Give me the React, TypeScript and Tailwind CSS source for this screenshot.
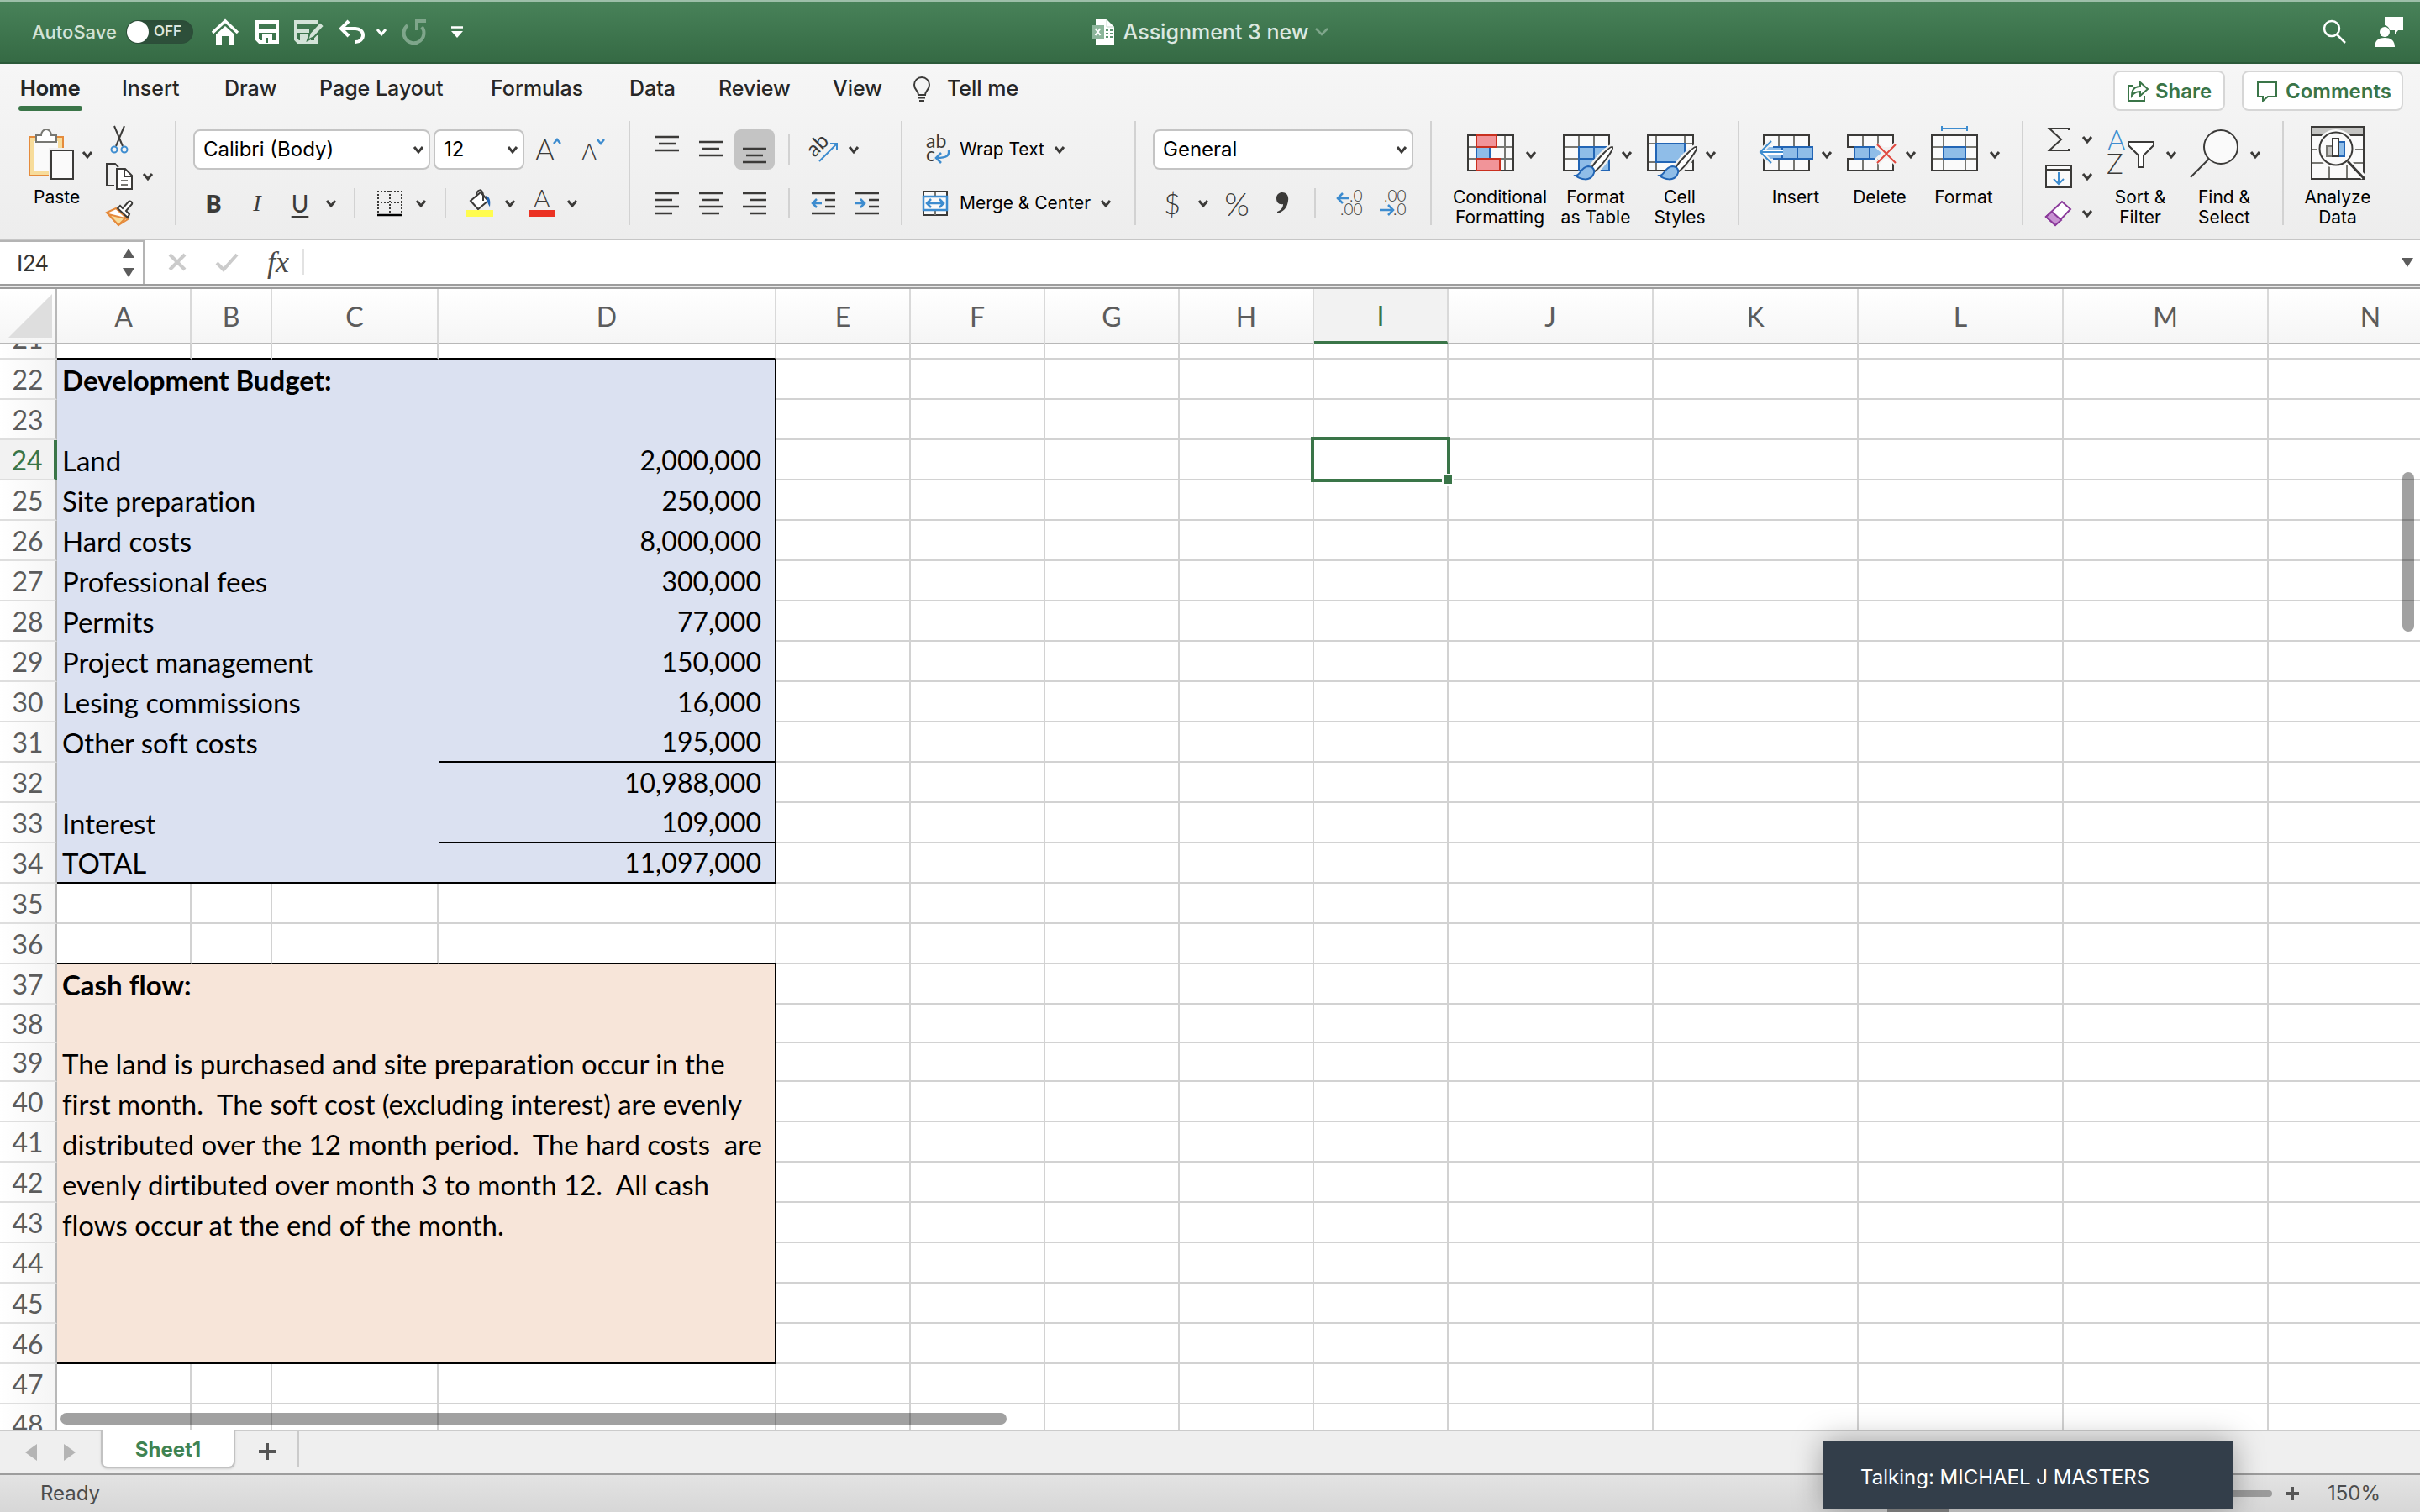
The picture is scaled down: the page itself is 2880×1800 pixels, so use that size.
import React from 'react';

const INK = '#3b3a38';
const BLUE = '#3d8ccf';
const DARK_BLUE = '#2265b5';
const LIGHT_BLUE = '#8fbde8';

interface SvgProps {
  w: number;
  h: number;
  children: React.ReactNode;
}

const Svg: React.FC<SvgProps> = ({ w, h, children }) => (
  <svg width={w} height={h} viewBox={`0 0 ${w} ${h}`} fill="none" className="shrink-0 overflow-visible" aria-hidden="true">
    {children}
  </svg>
);

const Chevron = ({ color = INK }: { color?: string }) => (
  <Svg w={12} h={10}>
    <path d="M1 2l5 6 5-6" stroke={color} strokeWidth="3" />
  </Svg>
);

const Separator = () => <div className="h-[124px] w-[2px] shrink-0 bg-[#d2d2d2]" />;
const SmallSeparator = ({ className = '' }: { className?: string }) => (
  <div className={`h-9 w-[2px] shrink-0 bg-[#d2d2d2] ${className}`} />
);

/* ---------- title bar ---------- */

const TitleBar = () => (
  <header className="grid h-[76px] shrink-0 grid-cols-[1fr_auto_1fr] items-center border-t-2 border-b-2 border-t-[#9dbfa9] border-b-[#2b5a39] bg-linear-to-b from-[#488259] to-[#356a44] text-white">
    <div className="flex items-center pl-[38px]">
      <label htmlFor="autosave" className="w-[112px] text-[22px] font-medium text-[#d3e3d8]">AutoSave</label>
      <button id="autosave" role="switch" aria-checked="false" className="flex h-7 w-20 items-center gap-[6px] rounded-full bg-[#2d4f3a] pl-px text-[17px] font-semibold text-[#dbe6df] shadow-inner">
        <span className="size-[26px] rounded-full bg-white" />
        OFF
      </button>
      <button aria-label="Home" className="ml-[22px]">
        <Svg w={32} h={30}>
          <path d="M1 16L16 2l15 14" stroke="#fff" strokeWidth="3.5" />
          <path d="M5 18L16 8l11 10v12h-7V20h-8v10H5z" fill="#fff" />
        </Svg>
      </button>
      <button aria-label="Save" className="ml-5">
        <Svg w={28} h={28}>
          <path d="M2 2h24v24H5l-3-3z" stroke="#fff" strokeWidth="4" />
          <path d="M2 13h24" stroke="#fff" strokeWidth="4" />
          <path d="M8 17h12v10H8z" fill="#fff" />
          <path d="M12 21h3v6h-3z" fill="#3d764e" />
        </Svg>
      </button>
      <button aria-label="Save as" className="ml-[18px]">
        <Svg w={36} h={28}>
          <path d="M28 2H2v21l3 3h21v-8" stroke="#d3e3d8" strokeWidth="4" />
          <path d="M2 13h16" stroke="#d3e3d8" strokeWidth="4" />
          <path d="M7 17h10l3 4v6H7z" fill="#d3e3d8" />
          <path d="M16 24l3-9L31 2l5 5-12 13z" fill="#d3e3d8" stroke="#3d764e" strokeWidth="2" />
        </Svg>
      </button>
      <button aria-label="Undo" className="ml-[18px]">
        <Svg w={30} h={28}>
          <path d="M11 1L2 10l9 9M3 10h16a9 8 0 0 1 0 16" stroke="#fff" strokeWidth="4" />
        </Svg>
      </button>
      <button aria-label="Undo history" className="ml-[14px]"><Chevron color="#fff" /></button>
      <button aria-label="Redo" className="ml-[18px]">
        <Svg w={30} h={30}>
          <path d="M7 7a12 12 0 1 0 17 2M17 2h12M18 0v13" stroke="#7fa68b" strokeWidth="4" />
        </Svg>
      </button>
      <button aria-label="Customize toolbar" className="ml-[29px]">
        <Svg w={14} h={14}>
          <path d="M0 1.500h14" stroke="#fff" strokeWidth="2.500" />
          <path d="M0 6h14l-7 8z" fill="#fff" />
        </Svg>
      </button>
    </div>
    <h1 className="flex items-center text-[25px] font-medium text-[#dce8e0]">
      <Svg w={28} h={30}>
        <path d="M5 0h13l9 9v21H5z" fill="#fff" />
        <path d="M18 0v9h9" stroke="#c9d8ce" />
        <path d="M17 12h3v2h-3zM22 12h3v2h-3zM17 16h3v2h-3zM22 16h3v2h-3zM17 20h3v2h-3zM22 20h3v2h-3z" fill="#5f9471" />
        <path d="M0 7h15v16H0z" fill="#8cb59a" />
        <path d="M4.500 11l6 8M10.500 11l-6 8" stroke="#fff" strokeWidth="2" />
      </Svg>
      <span className="ml-[10px] pt-[2px]">Assignment 3 new</span>
      <button aria-label="File options" className="ml-2">
        <Svg w={16} h={10}>
          <path d="M1 1l7 7 7-7" stroke="#7fa68b" strokeWidth="2.500" />
        </Svg>
      </button>
    </h1>
    <div className="flex items-center justify-end pr-5">
      <button aria-label="Search">
        <Svg w={28} h={28}>
          <circle cx="11" cy="10" r="9" stroke="#fff" strokeWidth="2.500" />
          <path d="M17 17l10 10" stroke="#fff" strokeWidth="2.500" />
        </Svg>
      </button>
      <button aria-label="Presence" className="ml-[34px]">
        <Svg w={34} h={36}>
          <path d="M12 0h22v16h-6l-4 5v-5H18a8 8 0 0 0-6-6z" fill="#fff" />
          <circle cx="12" cy="18" r="6" fill="#fff" />
          <path d="M0 36c0-8 5-11 12-11s12 3 12 11z" fill="#fff" />
        </Svg>
      </button>
    </div>
  </header>
);

/* ---------- ribbon tabs ---------- */

const tabs = [
  { name: 'Insert', width: 'w-[122px]' },
  { name: 'Draw', width: 'w-[113px]' },
  { name: 'Page Layout', width: 'w-[204px]' },
  { name: 'Formulas', width: 'w-[165px]' },
  { name: 'Data', width: 'w-[106px]' },
  { name: 'Review', width: 'w-[136px]' },
  { name: 'View', width: 'w-[96px]' },
];

const RibbonTabs = () => (
  <nav className="flex h-[68px] items-start text-[25px] font-medium text-[#262626]">
    <div className="w-[145px] shrink-0 pl-[22px]">
      <button className="relative h-14 px-[2px] pt-1 font-bold">
        Home
        <span className="absolute inset-x-0 bottom-0 h-[6px] rounded-full bg-[#3a7548]" />
      </button>
    </div>
    {tabs.map((tab) => (
      <button key={tab.name} className={`h-14 shrink-0 pt-1 text-left whitespace-nowrap ${tab.width}`}>{tab.name}</button>
    ))}
    <button className="flex h-14 items-center gap-5 pt-1">
      <Svg w={20} h={30}>
        <path d="M6 22c0-5-5-6-5-12a9 9 0 0 1 18 0c0 6-5 7-5 12zM6 25.500h8" stroke={INK} strokeWidth="2" />
        <path d="M7 29h6" stroke={INK} strokeWidth="2" />
      </Svg>
      Tell me
    </button>
    <div className="ml-auto flex gap-5 pt-2 pr-5 text-[24px] font-semibold text-[#3a7548]">
      <button className="flex h-12 w-[133px] items-center gap-2 rounded-lg border-2 border-[#d6d6d6] bg-white pt-[2px] pl-[14px]">
        <Svg w={26} h={26}>
          <path d="M8 6H2v18h19v-6" stroke="#3a7548" strokeWidth="2" />
          <path d="M16 2l9 8-9 8v-5c-5 0-8 2-10 5 0-8 4-11 10-11z" stroke="#3a7548" strokeWidth="2" />
        </Svg>
        Share
      </button>
      <button className="flex h-12 w-[192px] items-center gap-[10px] rounded-lg border-2 border-[#d6d6d6] bg-white pt-[2px] pl-4">
        <Svg w={24} h={24}>
          <path d="M1 1h22v17H13l-6 5v-5H1z" stroke="#3a7548" strokeWidth="2" />
        </Svg>
        Comments
      </button>
    </div>
  </nav>
);

/* ---------- ribbon tools ---------- */

interface DropdownProps {
  label: string;
  value: string;
  width: string;
}

const Dropdown: React.FC<DropdownProps> = ({ label, value, width }) => (
  <div className={`relative h-12 shrink-0 ${width}`}>
    <select aria-label={label} className="h-full w-full appearance-none rounded-lg border-2 border-[#c4c4c4] bg-white pl-[10px] text-[24px] text-black">
      <option>{value}</option>
    </select>
    <span className="pointer-events-none absolute inset-y-0 right-2 flex items-center"><Chevron /></span>
  </div>
);

interface BigButtonProps {
  label: React.ReactNode;
  icon: React.ReactNode;
  width?: string;
  chevron?: boolean;
}

const BigButton: React.FC<BigButtonProps> = ({ label, icon, width = 'w-[100px]', chevron = true }) => (
  <button className={`flex shrink-0 flex-col items-center pt-[10px] text-[21px] leading-6 text-black ${width}`}>
    <span className="flex h-[60px] items-center gap-[10px]">
      {icon}
      {chevron && <Chevron />}
    </span>
    <span className={`mt-[9px] whitespace-nowrap ${chevron ? 'pr-1' : ''}`}>{label}</span>
  </button>
);

const Lines = ({ d }: { d: string }) => <path d={d} stroke={INK} strokeWidth="2.500" />;

const Brush = () => (
  <>
    <path d="M59 21c-3-2-22 19-25 25l4 4c7-5 23-26 21-29z" fill="#fff" stroke="#f1f1f1" strokeWidth="7" />
    <path d="M59 21c-3-2-22 19-25 25l4 4c7-5 23-26 21-29z" fill="#fff" stroke={INK} strokeWidth="2" />
    <path d="M15 55c6 0 6-10 15-11 6 0 9 5 6 10-4 8-15 6-21 1z" fill={LIGHT_BLUE} stroke={DARK_BLUE} strokeWidth="2" />
  </>
);

const ConditionalIcon = () => (
  <Svg w={60} h={60}>
    <path d="M1 7h54v42H1z" fill="#fafafa" />
    <path d="M11 7v42M45 7v42M1 21h54M1 35h54" stroke="#777772" strokeWidth="2" />
    <path d="M1 7h54v42H1z" stroke={INK} strokeWidth="2" />
    <path d="M11 21h16v14H11z" fill={LIGHT_BLUE} stroke={DARK_BLUE} strokeWidth="2" />
    <path d="M11 7h24v14H11zM11 35h28v14H11z" fill="#f19499" stroke="#c9301f" strokeWidth="2" />
  </Svg>
);

const TableIcon = () => (
  <Svg w={60} h={60}>
    <path d="M1 7h54v42H1z" fill="#fafafa" />
    <path d="M19 7v42M37 7v14M1 21h54M1 35h18" stroke="#777772" strokeWidth="2" />
    <path d="M1 7h54v42H1z" stroke={INK} strokeWidth="2" />
    <path d="M19 21h36v28H19zM37 21v28M19 35h36" fill={LIGHT_BLUE} stroke={DARK_BLUE} strokeWidth="2" />
    <Brush />
  </Svg>
);

const StylesIcon = () => (
  <Svg w={60} h={60}>
    <path d="M1 7h54v42H1z" fill="#fafafa" />
    <path d="M11 7v42M45 7v42M1 17h54M1 39h54" stroke="#777772" strokeWidth="2" />
    <path d="M1 7h54v42H1z" stroke={INK} strokeWidth="2" />
    <path d="M11 17h34v22H11z" fill={LIGHT_BLUE} stroke={DARK_BLUE} strokeWidth="2" />
    <Brush />
  </Svg>
);

const InsertIcon = () => (
  <Svg w={60} h={60}>
    <path d="M1 7h54v42H1z" fill="#fafafa" />
    <path d="M19 7v42M37 7v42" stroke="#777772" strokeWidth="2" />
    <path d="M1 7h54v42H1z" stroke={INK} strokeWidth="2" />
    <path d="M4 21h55v14H4z" fill={LIGHT_BLUE} />
    <path d="M12 21h47v14H12M23 21v14M41 21v14" stroke={DARK_BLUE} strokeWidth="2" />
    <path d="M10 14L-3 27l13 13" stroke="#f1f1f1" strokeWidth="6" />
    <path d="M24 27H-1" stroke="#fff" strokeWidth="6" />
    <path d="M10 14L-3 27l13 13M24 27H-3" stroke={BLUE} strokeWidth="2" />
  </Svg>
);

const DeleteIcon = () => (
  <Svg w={60} h={60}>
    <path d="M1 7h54v14H1zM1 35h54v14H1z" fill="#fafafa" />
    <path d="M19 7v14M37 7v14M19 35v14M37 35v14" stroke="#777772" strokeWidth="2" />
    <path d="M9 21H1V7h54v10M9 35H1v14h54V40" stroke={INK} strokeWidth="2" />
    <path d="M9 21h24l8 7-8 7H9z" fill={LIGHT_BLUE} />
    <path d="M34 21H9v14h25M27 21v14" stroke={DARK_BLUE} strokeWidth="2" />
    <path d="M36 18l22 22M58 18L36 40" stroke="#f1f1f1" strokeWidth="6" />
    <path d="M36 18l22 22M58 18L36 40" stroke="#e0483e" strokeWidth="2" />
  </Svg>
);

const FormatIcon = () => (
  <Svg w={60} h={60}>
    <path d="M13-1h30M13-4v6M43-4v6" stroke={BLUE} strokeWidth="2" />
    <path d="M1 7h54v42H1z" fill="#fafafa" />
    <path d="M15 7v42M41 7v42M1 21h54M1 35h54" stroke="#777772" strokeWidth="2" />
    <path d="M1 7h54v42H1z" stroke={INK} strokeWidth="2" />
    <path d="M15 21h26v14H15z" fill={LIGHT_BLUE} stroke={DARK_BLUE} strokeWidth="2" />
  </Svg>
);

const SortIcon = () => (
  <Svg w={60} h={60}>
    <text x="0" y="25" fontSize="33" fontWeight="300" fontFamily="Lato" fill={BLUE}>A</text>
    <text x="-1" y="53" fontSize="33" fontWeight="300" fontFamily="Lato" fill={INK}>Z</text>
    <path d="M25 15h30v4L43 31v14h-6V31L25 19z" fill="#fff" stroke={INK} strokeWidth="2" />
  </Svg>
);

const FindIcon = () => (
  <Svg w={60} h={60}>
    <circle cx="35" cy="21" r="20" fill="#fafafa" stroke={INK} strokeWidth="2" />
    <path d="M21 35L-1 57" stroke={INK} strokeWidth="2" />
  </Svg>
);

const AnalyzeIcon = () => (
  <Svg w={64} h={60}>
    <path d="M1-3h62v62H1z" fill="#fafafa" />
    <path d="M1-3h62v10H1z" fill="#c4c4c2" />
    <path d="M1 24h62M1 40h62M22 40v19M43 40v19" stroke="#777772" strokeWidth="2" />
    <path d="M1-3h62v62H1zM1 7h62" stroke={INK} strokeWidth="2" />
    <circle cx="30" cy="23" r="23" fill="#fafafa" />
    <path d="M44 38l19 19" stroke="#fafafa" strokeWidth="7" />
    <path d="M19 20h7v12h-7z" fill="#c4c4c2" stroke="#777772" strokeWidth="2" />
    <path d="M33 15h7v17h-7z" fill={LIGHT_BLUE} stroke={DARK_BLUE} strokeWidth="2" />
    <path d="M26 11h7v21h-7z" fill="#fff" stroke={INK} strokeWidth="2" />
    <circle cx="30" cy="23" r="19.500" stroke={INK} strokeWidth="2" />
    <path d="M44 38l19 20" stroke={INK} strokeWidth="3" />
  </Svg>
);

const ClipboardGroup = () => (
  <div className="flex w-[208px] shrink-0 pl-[34px]">
    <button className="flex w-[92px] shrink-0 flex-col items-start pt-[10px] text-[21px] leading-6">
      <span className="flex h-[60px] items-center gap-[10px]">
        <Svg w={54} h={60}>
          <path d="M1 9h40v46H1z" fill="#f7dc9b" stroke="#e58b3c" strokeWidth="2" />
          <path d="M7 14h28v36H7z" fill="#fafafa" />
          <path d="M9 15V7h6a6 7 0 0 1 12 0h6v8z" fill="#fff" stroke="#777772" strokeWidth="2" />
          <path d="M24 22h30v38H24z" fill="#f1f1f1" />
          <path d="M27 25h26v34H27z" fill="#fafafa" stroke={INK} strokeWidth="2" />
        </Svg>
        <Chevron />
      </span>
      <span className="mt-[9px] ml-[6px]">Paste</span>
    </button>
    <div className="flex flex-col">
      <button aria-label="Cut" className="flex h-11 w-8 items-center justify-center">
        <Svg w={20} h={32}>
          <path d="M4 0l10 24M16 0L6 24" stroke={INK} strokeWidth="2" />
          <circle cx="4" cy="28" r="3.500" stroke={BLUE} strokeWidth="2" />
          <circle cx="16" cy="28" r="3.500" stroke={BLUE} strokeWidth="2" />
        </Svg>
      </button>
      <button aria-label="Copy" className="flex h-11 items-center gap-3">
        <Svg w={32} h={32}>
          <path d="M10 27H1V1h10l4 4" stroke={INK} strokeWidth="2" />
          <path d="M13 7h10l8 8v16H13z" fill="#fff" stroke={INK} strokeWidth="2" />
          <path d="M22 7v9h9" stroke={INK} strokeWidth="2" />
          <path d="M18 21h8M18 26h8" stroke="#777772" strokeWidth="2" />
        </Svg>
        <Chevron />
      </button>
      <button aria-label="Format painter" className="flex h-11 items-center">
        <Svg w={32} h={30}>
          <path d="M1 14l11-5 14 13-11 7z" fill="#fff" stroke="#e58b3c" strokeWidth="2" />
          <path d="M3 16l20 5-8 8z" fill="#f7dc9b" stroke="#e58b3c" strokeWidth="2" />
          <path d="M14 9l12 11 2-4-4-4 7-8c1-3-2-4-4-3l-7 8-3-3z" fill="#fff" stroke={INK} strokeWidth="2" />
        </Svg>
      </button>
    </div>
  </div>
);

const FontGroup = () => (
  <div className="w-[538px] shrink-0 pt-[10px] pl-5">
    <div className="flex h-12 items-center">
      <Dropdown label="Font" value="Calibri (Body)" width="w-[282px]" />
      <div className="w-1" />
      <Dropdown label="Font size" value="12" width="w-[108px]" />
      <button aria-label="Increase font size" className="ml-[14px]">
        <Svg w={30} h={32}>
          <text x="-1" y="29" fontSize="35" fontWeight="300" fontFamily="Lato" fill={INK}>A</text>
          <path d="M21 9l4-5 4 5" stroke={BLUE} strokeWidth="2.500" />
        </Svg>
      </button>
      <button aria-label="Decrease font size" className="ml-[25px]">
        <Svg w={28} h={32}>
          <text x="-1" y="29" fontSize="28" fontWeight="300" fontFamily="Lato" fill={INK}>A</text>
          <path d="M18 4l4 5 4-5" stroke={BLUE} strokeWidth="2.500" />
        </Svg>
      </button>
    </div>
    <div className="mt-[22px] flex h-9 items-center font-['Lato',sans-serif] text-[28px] leading-9 text-[#3b3a38]">
      <button aria-label="Bold" className="w-12 font-extrabold">B</button>
      <button aria-label="Italic" className="w-14 font-['Liberation_Serif',serif] italic">I</button>
      <button aria-label="Underline" className="w-[46px] underline decoration-2 underline-offset-4">U</button>
      <button aria-label="Underline options" className="flex w-7 justify-center"><Chevron /></button>
      <SmallSeparator className="ml-[13px]" />
      <button aria-label="Borders" className="ml-[26px] flex items-center gap-4">
        <Svg w={30} h={30}>
          <path d="M0 1h30M0 14h30M1 0v28M15 0v28M29 0v28" stroke={INK} strokeWidth="2" strokeDasharray="2 2" />
          <path d="M0 29h30" stroke="#000" strokeWidth="2.500" />
        </Svg>
        <Chevron />
      </button>
      <SmallSeparator className="ml-[22px]" />
      <button aria-label="Fill color" className="ml-6 flex items-center gap-[14px]">
        <Svg w={32} h={32}>
          <path d="M5 13L17 3l9 10-12 10z" fill="#fff" stroke={INK} strokeWidth="2" />
          <path d="M12 8c0-10 8-10 8-1v6" stroke={INK} strokeWidth="2" />
          <path d="M23 7c5 1 6 6 5 13-2-2-3-6-5-13z" fill={DARK_BLUE} />
          <path d="M0 24h32v8H0z" fill="#fffc4f" />
        </Svg>
        <Chevron />
      </button>
      <button aria-label="Font color" className="ml-4 flex items-center gap-[14px]">
        <Svg w={32} h={32}>
          <text x="6" y="21" fontSize="30" fontWeight="300" fontFamily="Lato" fill={INK}>A</text>
          <path d="M0 24h32v8H0z" fill="#eb3223" />
        </Svg>
        <Chevron />
      </button>
    </div>
  </div>
);

const AlignGroup = () => (
  <div className="w-[322px] shrink-0 pt-[10px] pl-5">
    <div className="flex h-12 items-center gap-1">
      <button aria-label="Top align" className="flex h-12 w-12 justify-center rounded-lg">
        <Svg w={28} h={48}><Lines d="M0 9h28M4 17h20M0 25h28" /></Svg>
      </button>
      <button aria-label="Middle align" className="flex h-12 w-12 justify-center rounded-lg">
        <Svg w={28} h={48}><Lines d="M0 15h28M4 23h20M0 31h28" /></Svg>
      </button>
      <button aria-label="Bottom align" className="flex h-12 w-12 justify-center rounded-lg bg-[#c4c4c4]">
        <Svg w={28} h={48}><Lines d="M0 23h28M4 31h20M0 39h28" /></Svg>
      </button>
      <SmallSeparator className="ml-3" />
      <button aria-label="Orientation" className="ml-5 flex items-center gap-3">
        <Svg w={34} h={32}>
          <text x="4" y="25" fontSize="25" fontFamily="Lato" fill={INK} transform="rotate(-45 6 24)">ab</text>
          <path d="M11 30L32 9M24 9h8v8" stroke={BLUE} strokeWidth="2" />
        </Svg>
        <Chevron />
      </button>
    </div>
    <div className="mt-[22px] flex h-9 items-center gap-1">
      <button aria-label="Align left" className="flex w-12 justify-center">
        <Svg w={28} h={26}><Lines d="M0 1h28M0 9h20M0 17h28M0 25h20" /></Svg>
      </button>
      <button aria-label="Align center" className="flex w-12 justify-center">
        <Svg w={28} h={26}><Lines d="M0 1h28M4 9h20M0 17h28M4 25h20" /></Svg>
      </button>
      <button aria-label="Align right" className="flex w-12 justify-center">
        <Svg w={28} h={26}><Lines d="M0 1h28M8 9h20M0 17h28M8 25h20" /></Svg>
      </button>
      <SmallSeparator className="ml-3" />
      <button aria-label="Decrease indent" className="ml-3 flex w-12 justify-center">
        <Svg w={28} h={26}>
          <Lines d="M0 1h28M16 9h12M16 17h12M0 25h28" />
          <path d="M6 8l-5 5 5 5M1 13h11" stroke={BLUE} strokeWidth="2.500" />
        </Svg>
      </button>
      <button aria-label="Increase indent" className="flex w-12 justify-center">
        <Svg w={28} h={26}>
          <Lines d="M0 1h28M16 9h12M16 17h12M0 25h28" />
          <path d="M6 8l5 5-5 5M11 13H0" stroke={BLUE} strokeWidth="2.500" />
        </Svg>
      </button>
    </div>
  </div>
);

const WrapGroup = () => (
  <div className="w-[276px] shrink-0 pt-[10px] pl-6 text-[21px] text-black">
    <button className="flex h-12 items-center gap-3 whitespace-nowrap">
      <Svg w={32} h={32}>
        <text x="4" y="14" fontSize="23" fontFamily="Lato" fill={INK}>ab</text>
        <text x="4" y="30" fontSize="23" fontFamily="Lato" fill={INK}>c</text>
        <path d="M31 17c1 6-2 9-14 9M22 20l-6 6 6 6" stroke={BLUE} strokeWidth="2.500" />
      </Svg>
      <span>Wrap Text</span>
      <Chevron />
    </button>
    <button className="mt-[22px] flex h-9 items-center gap-3 whitespace-nowrap">
      <Svg w={32} h={30}>
        <path d="M1 1h28v28H1z" fill="#fafafa" stroke={INK} strokeWidth="2" />
        <path d="M15 1v28" stroke="#777772" strokeWidth="2" />
        <path d="M1 7h28v16H1z" fill="#fafafa" stroke={BLUE} strokeWidth="2.500" />
        <path d="M5 15h20M10 10l-5 5 5 5M20 10l5 5-5 5" stroke={BLUE} strokeWidth="2.500" />
      </Svg>
      <span>Merge &amp; Center</span>
      <Chevron />
    </button>
  </div>
);

const NumberGroup = () => (
  <div className="w-[350px] shrink-0 pt-[10px] pl-5">
    <Dropdown label="Number format" value="General" width="w-[310px]" />
    <div className="mt-[22px] flex h-9 items-center font-['Lato',sans-serif] text-[34px] leading-9 font-light text-[#3b3a38]">
      <button aria-label="Currency" className="w-[46px]">$</button>
      <button aria-label="Currency options" className="flex w-7 justify-center"><Chevron /></button>
      <button aria-label="Percent" className="ml-1 w-[44px] text-center text-[38px]">%</button>
      <button aria-label="Comma style" className="ml-[24px]">
        <Svg w={16} h={26}>
          <path d="M8 0c5 0 8 4 7 10-1 8-5 13-13 15v-2c5-2 7-5 7-9C4 15 1 12 1 7c0-4 3-7 7-7z" fill={INK} />
        </Svg>
      </button>
      <SmallSeparator className="ml-[30px]" />
      <button aria-label="Increase decimal" className="ml-6">
        <Svg w={32} h={32}>
          <text x="16" y="14" fontSize="19" fontFamily="Lato" fill={INK}>.0</text>
          <text x="5" y="30" fontSize="19" fontFamily="Lato" fill={INK}>.00</text>
          <path d="M16 10H1M8 4l-6 6 6 6" stroke={BLUE} strokeWidth="2.500" />
        </Svg>
      </button>
      <button aria-label="Decrease decimal" className="ml-5">
        <Svg w={32} h={32}>
          <text x="5" y="14" fontSize="19" fontFamily="Lato" fill={INK}>.00</text>
          <text x="16" y="30" fontSize="19" fontFamily="Lato" fill={INK}>.0</text>
          <path d="M0 24h16M10 18l6 6-6 6" stroke={BLUE} strokeWidth="2.500" />
        </Svg>
      </button>
    </div>
  </div>
);

const EditingGroup = () => (
  <div className="flex w-[308px] shrink-0 pl-[26px]">
    <div className="flex w-[65px] flex-col">
      <button aria-label="AutoSum" className="flex h-11 items-center gap-3">
        <Svg w={32} h={30}>
          <path d="M28 4V2H5l14 13L5 28h23v-2" stroke={INK} strokeWidth="2" />
        </Svg>
        <Chevron />
      </button>
      <button aria-label="Fill" className="flex h-11 items-center gap-3">
        <Svg w={32} h={28}>
          <path d="M1 1h30v26H1zM1 6h30" fill="#fafafa" stroke={INK} strokeWidth="2" />
          <path d="M16 9v14M10 17l6 6 6-6" stroke={BLUE} strokeWidth="2" />
        </Svg>
        <Chevron />
      </button>
      <button aria-label="Clear" className="flex h-11 items-center gap-3">
        <Svg w={32} h={30}>
          <path d="M1 19L20 1l10 9-18 19z" fill="#fff" stroke="#8b3a9b" strokeWidth="2" />
          <path d="M1 19l7-6 11 10-7 6z" fill="#c893d2" stroke="#8b3a9b" strokeWidth="2" />
        </Svg>
        <Chevron />
      </button>
    </div>
    <BigButton label={<>Sort &amp;<br />Filter</>} icon={<SortIcon />} />
    <BigButton label={<>Find &amp;<br />Select</>} icon={<FindIcon />} />
  </div>
);

const Ribbon = () => (
  <section className="shrink-0 border-b-2 border-[#c6c6c6] bg-linear-to-b from-[#f6f6f6] to-[#ededed]">
    <RibbonTabs />
    <div className="flex h-[140px] items-start">
      <ClipboardGroup />
      <Separator />
      <FontGroup />
      <Separator />
      <AlignGroup />
      <Separator />
      <WrapGroup />
      <Separator />
      <NumberGroup />
      <Separator />
      <div className="flex w-[364px] shrink-0 pl-[19px]">
        <BigButton width="w-32" label={<>Conditional<br />Formatting</>} icon={<ConditionalIcon />} />
        <BigButton label={<>Format<br />as Table</>} icon={<TableIcon />} />
        <BigButton label={<>Cell<br />Styles</>} icon={<StylesIcon />} />
      </div>
      <Separator />
      <div className="flex w-[336px] shrink-0 pl-[19px]">
        <BigButton label="Insert" icon={<InsertIcon />} />
        <BigButton label="Delete" icon={<DeleteIcon />} />
        <BigButton label="Format" icon={<FormatIcon />} />
      </div>
      <Separator />
      <EditingGroup />
      <Separator />
      <div className="pl-[14px]">
        <BigButton label={<>Analyze<br />Data</>} icon={<AnalyzeIcon />} chevron={false} />
      </div>
    </div>
  </section>
);

/* ---------- formula bar ---------- */

const FormulaBar = () => (
  <div className="flex h-[52px] shrink-0 items-center bg-white">
    <div className="flex h-full w-[172px] shrink-0 items-center justify-between border-t-2 border-r-2 border-[#b4b4b4] pr-[10px] pl-5">
      <input aria-label="Name box" defaultValue="I24" className="w-24 font-['Lato',sans-serif] text-[26px] text-[#333] outline-none" />
      <span className="flex flex-col gap-3">
        <Svg w={14} h={11}><path d="M7 0l7 11H0z" fill="#5c5c5c" /></Svg>
        <Svg w={14} h={11}><path d="M7 11L0 0h14z" fill="#5c5c5c" /></Svg>
      </span>
    </div>
    <button aria-label="Cancel" className="ml-7">
      <Svg w={22} h={22}><path d="M2 2l18 18M20 2L2 20" stroke="#cbcbcb" strokeWidth="4" /></Svg>
    </button>
    <button aria-label="Enter" className="ml-[34px]">
      <Svg w={28} h={22}><path d="M2 12l8 8L26 2" stroke="#cbcbcb" strokeWidth="4" /></Svg>
    </button>
    <button aria-label="Insert function" className="ml-[34px] w-[42px] text-left font-['Liberation_Serif',serif] text-[36px] leading-none text-[#4a4a4a] italic">fx</button>
    <div className="h-[30px] w-[2px] shrink-0 bg-[#e2e2e2]" />
    <input aria-label="Formula" className="h-full min-w-0 flex-1 px-3 font-['Lato',sans-serif] text-[26px] outline-none" />
    <button aria-label="Expand formula bar" className="mr-2">
      <Svg w={14} h={11}><path d="M7 11L0 0h14z" fill="#5c5c5c" /></Svg>
    </button>
  </div>
);

/* ---------- sheet ---------- */

const columns = [
  { name: 'A', width: 'w-[160px]' },
  { name: 'B', width: 'w-[96px]' },
  { name: 'C', width: 'w-[198px]' },
  { name: 'D', width: 'w-[402px]' },
  { name: 'E', width: 'w-[160px]' },
  { name: 'F', width: 'w-[160px]' },
  { name: 'G', width: 'w-[160px]' },
  { name: 'H', width: 'w-[160px]' },
  { name: 'I', width: 'w-[160px]' },
  { name: 'J', width: 'w-[244px]' },
  { name: 'K', width: 'w-[244px]' },
  { name: 'L', width: 'w-[244px]' },
  { name: 'M', width: 'w-[244px]' },
  { name: 'N', width: 'w-[244px]' },
];

const budget: Record<number, { label: string; amount?: string; underline?: boolean }> = {
  22: { label: 'Development Budget:' },
  23: { label: '' },
  24: { label: 'Land', amount: '2,000,000' },
  25: { label: 'Site preparation', amount: '250,000' },
  26: { label: 'Hard costs', amount: '8,000,000' },
  27: { label: 'Professional fees', amount: '300,000' },
  28: { label: 'Permits', amount: '77,000' },
  29: { label: 'Project management', amount: '150,000' },
  30: { label: 'Lesing commissions', amount: '16,000' },
  31: { label: 'Other soft costs', amount: '195,000', underline: true },
  32: { label: '', amount: '10,988,000' },
  33: { label: 'Interest', amount: '109,000', underline: true },
  34: { label: 'TOTAL', amount: '11,097,000' },
};

const cashFlow = [
  'The land is purchased and site preparation occur in the',
  'first month.  The soft cost (excluding interest) are evenly',
  'distributed over the 12 month period.  The hard costs  are',
  'evenly dirtibuted over month 3 to month 12.  All cash',
  'flows occur at the end of the month.',
].join('\n');

const rowNumbers = Array.from({ length: 28 }, (_, i) => 21 + i);

const GRID = 'border-r-2 border-b-2 border-[#d2d2d2] p-0';

const isShort = (row: number) => row === 38 || row === 39;

const rowHeight = (row: number) => {
  if (row === 21) return 'h-[18px]';
  return isShort(row) ? 'h-[46px]' : 'h-12';
};

const LeftCells = ({ row }: { row: number }) => {
  const item = budget[row];
  if (item) {
    const last = row === 34;
    return (
      <>
        <td colSpan={3} className={`bg-[#dbe1f1] p-0 pl-[6px] text-[33px] ${row === 22 ? 'font-bold' : ''} ${last ? 'border-b-2 border-black' : ''}`}>{item.label}</td>
        <td className={`border-r-2 border-black bg-[#dbe1f1] p-0 pr-4 text-right ${last || item.underline ? 'border-b-2' : ''}`}>{item.amount}</td>
      </>
    );
  }
  if (row === 37 || row === 38) {
    return <td colSpan={4} className="border-r-2 border-black bg-[#f7e5d9] p-0 pl-[6px] text-[33px] font-bold">{row === 37 ? 'Cash flow:' : ''}</td>;
  }
  if (row === 39) {
    return (
      <td colSpan={4} rowSpan={8} className="border-r-2 border-b-2 border-black bg-[#f7e5d9] p-0 pl-[6px] align-top text-[33px] leading-[48px] whitespace-pre">{cashFlow}</td>
    );
  }
  if (row > 39 && row < 47) return null;
  return (
    <>
      {columns.slice(0, 4).map((col) => (
        <td key={col.name} className={`${GRID} ${row === 21 || row === 36 ? 'border-b-black' : ''}`} />
      ))}
    </>
  );
};

const Sheet = () => (
  <main className="relative min-h-0 flex-1 overflow-hidden bg-white font-['Lato',sans-serif] text-[32px] leading-[46px] text-black [font-variant-ligatures:none]">
    <table className="w-0 min-w-full table-fixed border-separate border-spacing-0">
      <thead>
        <tr className="h-[66px] bg-linear-to-b from-white to-[#f5f5f5] text-[#5c5c5c]">
          <th className="w-[68px] border-r-2 border-b-2 border-[#b8b8b8] p-0">
            <button aria-label="Select all" className="block pl-[10px]">
              <Svg w={52} h={52}><path d="M52 0v52H0z" fill="#dedede" /></Svg>
            </button>
          </th>
          {columns.map((col) => (
            <th
              key={col.name}
              scope="col"
              className={`border-r-2 border-r-[#d9d9d9] p-0 pt-[2px] font-normal ${col.width} ${
                col.name === 'I' ? 'border-b-4 border-b-[#3a7548] bg-[#f2f2f2] text-[#3a7548]' : 'border-b-2 border-b-[#b8b8b8]'
              }`}
            >
              {col.name}
            </th>
          ))}
        </tr>
      </thead>
      <tbody>
        {rowNumbers.map((row) => (
          <tr key={row} className={rowHeight(row)}>
            <th
              scope="row"
              className={`border-b-2 border-b-[#dedede] p-0 text-center align-bottom font-normal ${
                row === 24
                  ? 'border-r-4 border-r-[#3a7548] bg-[#f2f2f2] text-[#3a7548]'
                  : 'border-r-2 border-r-[#b8b8b8] bg-linear-to-r from-white to-[#f5f5f5] text-[#5c5c5c]'
              }`}
            >
              {row === 21 ? (
                <div className="flex h-4 items-end justify-center overflow-hidden">{row}</div>
              ) : (
                <div className={`pt-[2px] ${isShort(row) ? 'leading-[42px]' : 'leading-[44px]'}`}>{row}</div>
              )}
            </th>
            <LeftCells row={row} />
            {columns.slice(4).map((col) => (
              <td key={col.name} className={`${GRID} ${row === 24 && col.name === 'I' ? 'relative' : ''}`}>
                {row === 24 && col.name === 'I' && (
                  <div className="absolute -inset-1 border-4 border-[#3a7548]">
                    <div className="absolute -right-2 -bottom-2 size-[14px] border-2 border-white bg-[#3a7548]" />
                  </div>
                )}
              </td>
            ))}
          </tr>
        ))}
      </tbody>
    </table>
    <div className="absolute right-[7px] top-[218px] h-[190px] w-[14px] rounded-full bg-black/37" />
    <div className="absolute bottom-[6px] left-[72px] h-[14px] w-[1126px] rounded-full bg-black/37" />
  </main>
);

/* ---------- footer ---------- */

const SheetTabs = () => (
  <div className="flex h-[52px] shrink-0 items-start border-t-2 border-[#cbcbcb] bg-[#efefef]">
    <button aria-label="Previous sheet" className="mt-[15px] ml-[30px]">
      <Svg w={14} h={20}><path d="M14 0v20L0 10z" fill="#b4b4b4" /></Svg>
    </button>
    <button aria-label="Next sheet" className="mt-[15px] ml-8">
      <Svg w={14} h={20}><path d="M0 0v20l14-10z" fill="#b4b4b4" /></Svg>
    </button>
    <button className="-mt-[2px] ml-[30px] h-[46px] w-[160px] rounded-b-lg border-2 border-t-0 border-[#c2c2c2] bg-white pt-1 text-[24px] font-bold text-[#3f8352] shadow-sm">Sheet1</button>
    <button aria-label="Add sheet" className="mt-[14px] ml-7">
      <Svg w={20} h={20}><path d="M10 0v20M0 10h20" stroke="#555" strokeWidth="4" /></Svg>
    </button>
    <div className="ml-[26px] h-[42px] w-[2px] bg-[#cbcbcb]" />
  </div>
);

const StatusBar = () => (
  <footer className="flex h-[46px] shrink-0 items-center border-t-2 border-[#9d9d9d] bg-linear-to-b from-[#e3e3e3] to-[#d7d7d7] pr-[46px] pl-12 text-[24px] text-[#4d4d4d]">
    <span>Ready</span>
    <div className="mr-[72px] ml-auto h-1 w-[74px] self-end bg-[#8c8c8c]" />
    <input
      type="range"
      aria-label="Zoom"
      min={10}
      max={400}
      defaultValue={150}
      className="h-2 w-[312px] appearance-none rounded-full bg-[#9b9b9b] [&::-webkit-slider-thumb]:size-5 [&::-webkit-slider-thumb]:appearance-none"
    />
    <button aria-label="Zoom in" className="ml-4">
      <Svg w={16} h={16}><path d="M8 0v16M0 8h16" stroke="#555" strokeWidth="4" /></Svg>
    </button>
    <span className="ml-[34px] w-16">150%</span>
  </footer>
);

const App = () => {
  return (
    <div className="relative flex h-screen flex-col overflow-hidden bg-white font-['Inter',sans-serif]">
      <TitleBar />
      <Ribbon />
      <FormulaBar />
      <div className="h-[6px] shrink-0 border-t-2 border-b-2 border-[#9d9d9d] bg-[#ececec]" />
      <Sheet />
      <SheetTabs />
      <StatusBar />
      <div role="status" className="absolute right-[222px] bottom-1 flex h-20 w-[488px] items-center bg-[#333e4a] pt-[6px] pl-11 text-[24px] whitespace-nowrap text-white shadow-[0_0_36px_rgba(0,0,0,0.35)]">
        Talking: MICHAEL J MASTERS
      </div>
    </div>
  );
};

export default App;
